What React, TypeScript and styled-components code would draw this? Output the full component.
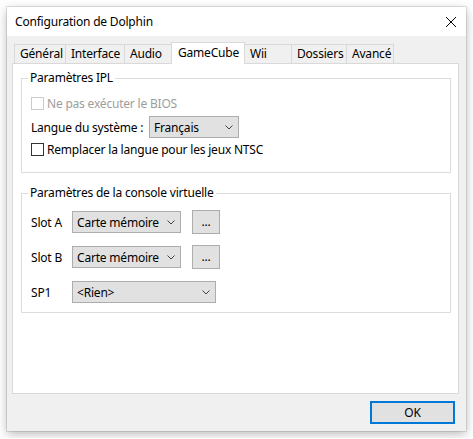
import React from "react";
import styled, { createGlobalStyle } from "styled-components";

const Global = createGlobalStyle`
  html, body { margin: 0; padding: 0; background: #ffffff; }
  body {
    font-family: "Segoe UI", "Noto Sans", "DejaVu Sans", sans-serif;
    font-size: 12px;
    letter-spacing: -0.2px;
    color: #000;
  }
  * { box-sizing: border-box; }
`;

const Stage = styled.div`
  padding: 7px;
`;

const Window = styled.div`
  width: 459px;
  height: 424px;
  display: flex;
  flex-direction: column;
  background: #f0f0f0;
  box-shadow: 0 0 0 1px rgba(0, 0, 0, 0.1), 0 3px 10px rgba(0, 0, 0, 0.28);
`;

const TitleBar = styled.div`
  height: 29px;
  flex: none;
  background: #ffffff;
  display: flex;
  align-items: center;
  justify-content: space-between;
  padding: 0 10px 0 8px;
`;

const Title = styled.span`
  font-size: 12px;
  line-height: 16px;
  margin-top: 1px;
`;

const CloseIcon = styled.svg`
  width: 10px;
  height: 10px;
  display: block;
  margin-top: 1px;
`;

const Body = styled.div`
  flex: 1;
  display: flex;
  flex-direction: column;
  padding: 6px 7px 0 5px;
  min-height: 0;
`;

const TabStrip = styled.div`
  height: 21px;
  flex: none;
  display: flex;
  align-items: flex-end;
  padding-left: 2px;
  position: relative;
  z-index: 1;
`;

const Tab = styled.div<{ $w: number; $active?: boolean }>`
  width: ${(p) => p.$w}px;
  height: ${(p) => (p.$active ? 22 : 19)}px;
  margin-bottom: ${(p) => (p.$active ? -1 : 0)}px;
  margin-left: -1px;
  &:first-child { margin-left: 0; }
  border: 1px solid #d9d9d9;
  border-bottom: none;
  background: ${(p) => (p.$active ? "#ffffff" : "#f0f0f0")};
  position: relative;
  z-index: ${(p) => (p.$active ? 2 : 1)};
  padding-left: ${(p) => (p.$active ? 6 : 5)}px;
  line-height: ${(p) => (p.$active ? 19 : 18)}px;
  white-space: nowrap;
`;

const Panel = styled.div`
  flex: 1;
  background: #ffffff;
  border: 1px solid #d9d9d9;
  padding: 7px 7px 0 8px;
  display: flex;
  flex-direction: column;
`;

const GroupBox = styled.fieldset<{ $pt: number; $pb: number; $mt?: number }>`
  margin: ${(p) => p.$mt ?? 0}px 0 0 0;
  border: 1px solid #dcdcdc;
  padding: ${(p) => p.$pt}px 9px ${(p) => p.$pb}px 9px;
  display: flex;
  flex-direction: column;
  min-width: 0;
`;

const Legend = styled.legend`
  padding: 0 2px;
  margin-left: -3px;
  line-height: 14px;
  height: 14px;
`;

const Row = styled.div<{ $h: number; $mt?: number }>`
  height: ${(p) => p.$h}px;
  margin-top: ${(p) => p.$mt ?? 0}px;
  display: flex;
  align-items: center;
`;

const CheckLabel = styled.label<{ $disabled?: boolean }>`
  display: flex;
  align-items: center;
  gap: 3px;
  color: ${(p) => (p.$disabled ? "#9d9d9d" : "#000")};
`;

const CheckBox = styled.span<{ $disabled?: boolean }>`
  width: 13px;
  height: 13px;
  flex: none;
  background: #ffffff;
  border: 1px solid ${(p) => (p.$disabled ? "#cccccc" : "#333333")};
`;

const FieldLabel = styled.span<{ $w: number }>`
  width: ${(p) => p.$w}px;
  flex: none;
  white-space: nowrap;
`;

const Select = styled.div<{ $w: number }>`
  width: ${(p) => p.$w}px;
  height: 22px;
  flex: none;
  background: #e1e1e1;
  border: 1px solid #adadad;
  display: flex;
  align-items: center;
  justify-content: space-between;
  padding: 0 5px 0 4px;
  white-space: nowrap;
`;

const Chevron = styled.svg`
  width: 8px;
  height: 5px;
  display: block;
`;

const SmallButton = styled.div`
  width: 28px;
  height: 24px;
  flex: none;
  margin-left: 11px;
  background: #e1e1e1;
  border: 1px solid #adadad;
  display: flex;
  align-items: center;
  justify-content: center;
  padding-bottom: 2px;
`;

const Footer = styled.div`
  height: 37px;
  flex: none;
  display: flex;
  justify-content: flex-end;
  align-items: flex-start;
  padding: 7px 11px 0 0;
`;

const OkButton = styled.div`
  width: 85px;
  height: 23px;
  background: #e1e1e1;
  border: 2px solid #0078d7;
  display: flex;
  align-items: center;
  justify-content: center;
`;

const Arrow = () => (
  <Chevron viewBox="0 0 8 5">
    <polyline points="0.5,0.5 4,4 7.5,0.5" fill="none" stroke="#444" strokeWidth="1" />
  </Chevron>
);

const Dropdown = ({ w, value }: { w: number; value: string }) => (
  <Select $w={w}>
    <span>{value}</span>
    <Arrow />
  </Select>
);

const tabs = [
  { label: "Général", w: 52 },
  { label: "Interface", w: 60 },
  { label: "Audio", w: 48 },
  { label: "GameCube", w: 74, active: true },
  { label: "Wii", w: 48 },
  { label: "Dossiers", w: 56 },
  { label: "Avancé", w: 48 },
];

export default function App() {
  return (
    <Stage>
      <Global />
      <Window>
        <TitleBar>
          <Title>Configuration de Dolphin</Title>
          <CloseIcon viewBox="0 0 10 10">
            <line x1="0" y1="0" x2="10" y2="10" stroke="#000" strokeWidth="1" />
            <line x1="10" y1="0" x2="0" y2="10" stroke="#000" strokeWidth="1" />
          </CloseIcon>
        </TitleBar>
        <Body>
          <TabStrip>
            {tabs.map((t) => (
              <Tab key={t.label} $w={t.w} $active={t.active}>
                {t.label}
              </Tab>
            ))}
          </TabStrip>
          <Panel>
            <GroupBox $pt={10} $pb={15}>
              <Legend>Paramètres IPL</Legend>
              <Row $h={16}>
                <CheckLabel $disabled>
                  <CheckBox $disabled />
                  Ne pas exécuter le BIOS
                </CheckLabel>
              </Row>
              <Row $h={22} $mt={5}>
                <FieldLabel $w={118}>Langue du système :</FieldLabel>
                <Dropdown w={90} value="Français" />
              </Row>
              <Row $h={16} $mt={3}>
                <CheckLabel>
                  <CheckBox />
                  Remplacer la langue pour les jeux NTSC
                </CheckLabel>
              </Row>
            </GroupBox>
            <GroupBox $pt={10} $pb={8} $mt={13}>
              <Legend>Paramètres de la console virtuelle</Legend>
              <Row $h={24}>
                <FieldLabel $w={41}>Slot A</FieldLabel>
                <Dropdown w={109} value="Carte mémoire" />
                <SmallButton>...</SmallButton>
              </Row>
              <Row $h={24} $mt={11}>
                <FieldLabel $w={41}>Slot B</FieldLabel>
                <Dropdown w={109} value="Carte mémoire" />
                <SmallButton>...</SmallButton>
              </Row>
              <Row $h={24} $mt={11}>
                <FieldLabel $w={41}>SP1</FieldLabel>
                <Dropdown w={144} value="<Rien>" />
              </Row>
            </GroupBox>
          </Panel>
        </Body>
        <Footer>
          <OkButton>OK</OkButton>
        </Footer>
      </Window>
    </Stage>
  );
}
